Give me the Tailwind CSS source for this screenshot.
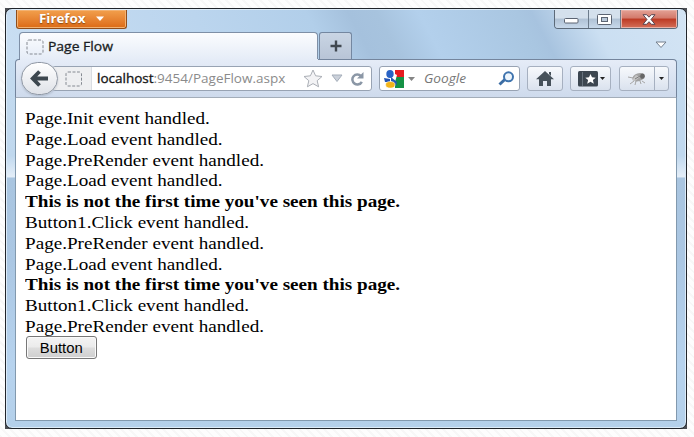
<!DOCTYPE html>
<html lang="en">
<head>
<meta charset="utf-8">
<title>Page Flow</title>
<script src="https://cdn.jsdelivr.net/npm/@tailwindcss/browser@4"></script>
</head>
<body class="w-[694px] h-[437px] overflow-hidden bg-[#fafafa] bg-[repeating-linear-gradient(45deg,#f7f7f7_0_2px,#fdfdfd_2px_6px)] pl-[5px] pt-[8px]">
<div class="w-[682px] h-[421px] bg-[#4a4d52]">
<div class="w-full h-full rounded-[7px] border border-[#20242a] bg-[linear-gradient(#c6dcf0,#c0d8ee_35%,#e4eef8_40%,#a9c5e0_40.4%,#abc7e3_60%,#b7d3ee_85%,#b4d0ea)] flex flex-col shadow-[inset_0_0_0_1px_#dcebf8] overflow-hidden">
  <div class="h-[50px] shrink-0 flex flex-col rounded-t-[5px] bg-[linear-gradient(62deg,#c9def2_0%,#bbd5ee_30%,#b2cfea_46%,#a5c1dd_52%,#a7c3de_56%,#b3d0ec_62%,#a9c6e1_76%,#a7c3df_78%,#cbdff2_86%,#d3e4f4_100%)] mx-px mt-px">
    <!-- title bar -->
    <div class="h-[23px] flex justify-between pl-[9px] pr-[20px]">
      <div class="w-[111px] h-[19px] rounded-b-[3px] border border-t-0 border-[#8f4d1b] bg-gradient-to-b from-[#f2a04c] to-[#dc6a12] shadow-[inset_0_0_0_1px_#f3b272] flex items-center pl-[22px] gap-[9px]">
        <span class="font-['Open_Sans',sans-serif] font-bold text-[11.5px] leading-none text-white w-[47px] whitespace-nowrap [text-shadow:0_1px_1px_#8a4a10]"><span class="inline-block origin-left scale-x-[1.16]">Firefox</span></span>
        <svg width="10" height="6" viewBox="0 0 10 6"><path d="M1 .5h8L5 5z" fill="#fff"/></svg>
      </div>
      <div class="w-[124px] h-[19px] -mr-[13px] rounded-b-[4px] border border-t-0 border-[#5c6a79] flex overflow-hidden">
        <div class="w-[34px] bg-[linear-gradient(#d4e0ec_45%,#b0c2d5_50%,#c7d8ea)] border-r border-[#6d7c8c] flex items-center justify-center pt-[4px]">
          <svg width="15" height="6"><rect x=".5" y=".5" width="13.5" height="4.5" rx="1" fill="#fff" stroke="#5c6472"/></svg>
        </div>
        <div class="w-[32px] bg-[linear-gradient(#d4e0ec_45%,#b0c2d5_50%,#c7d8ea)] border-r border-[#6d7c8c] flex items-center justify-center">
          <svg width="15" height="11"><rect x=".5" y=".5" width="14" height="10" rx="1" fill="#fff" stroke="#5c6472"/><rect x="4.5" y="3.5" width="6" height="4" fill="#b9c8d8" stroke="#5c6472"/></svg>
        </div>
        <div class="flex-1 bg-[linear-gradient(#e3a195,#d3796a_45%,#bd3a24_50%,#d4705a)] shadow-[inset_0_0_0_1px_#e9b0a6] flex items-center justify-center">
          <svg width="14" height="11" viewBox="0 0 14 11"><path d="M1 .7h3.6L7 3.2 9.4.7H13L9 5.5l4 4.8H9.4L7 7.7l-2.4 2.6H1l4-4.8z" fill="#fff" stroke="#5b4550"/></svg>
        </div>
      </div>
    </div>
    <!-- tab strip -->
    <div class="flex-1 flex pl-[12px] pr-[20px]">
      <div class="w-[299px] h-[28px] rounded-t-[4px] border border-b-0 border-[#7e8fa6] bg-gradient-to-b from-[#fbfcfe] to-[#e5ecf7] flex items-center pl-[6px] gap-[4px]">
        <svg width="18" height="16"><rect x="1" y="1" width="16" height="14" rx="2" fill="none" stroke="#858a92" stroke-dasharray="3 1.5"/></svg>
        <span class="font-['Open_Sans',sans-serif] text-[12px] leading-none text-[#1b1f25] whitespace-nowrap [-webkit-text-stroke:0.3px_#1b1f25] origin-left scale-x-[1.16]">Page Flow</span>
      </div>
      <div class="w-[33px] h-[27px] ml-px rounded-t-[3px] border border-b-0 border-[#7487a0] bg-gradient-to-b from-[#c9d5e4] to-[#b8c4d6] flex items-center justify-center">
        <svg width="12" height="12"><path d="M6 .5v11M.5 6h11" stroke="#414850" stroke-width="2.4"/></svg>
      </div>
      <div class="flex-1 flex justify-end items-center pb-[2px]">
        <svg class="-mr-[2px]" width="12" height="8"><path d="M1 1h10L6 6.5z" fill="#fff" stroke="#727e8c"/></svg>
      </div>
    </div>
  </div>
  <!-- navigation bar -->
  <div class="h-[39px] shrink-0 ml-[9px] mr-[9px] -mt-px border border-[#74859d] border-b-[#a3adb9] rounded-t-[4px] bg-gradient-to-b from-[#e5ecf7] to-[#cedaec] flex items-center relative">
    <div class="absolute left-[4px] -top-px w-[298px] h-px bg-[#e5ecf7]"></div>
    <div class="w-[37px] h-[33px] shrink-0 ml-[5px] rounded-full border border-[#9098a4] bg-gradient-to-b from-white to-[#dfe2e8] shadow-[0_1px_2px_#7c879860] flex items-center justify-center relative z-10">
      <svg width="19" height="17" viewBox="0 0 19 17"><path d="M9.5 1.5L2.7 8.5l6.8 7M3 8.5h15" fill="none" stroke="#3d474f" stroke-width="3.8"/></svg>
    </div>
    <div class="w-[320px] h-[25px] -ml-[6px] shrink-0 border border-[#98a3b3] rounded-[3px] bg-white flex items-center overflow-hidden">
      <div class="w-[39px] h-full pl-[12px] bg-[#eeeff1] border-r border-[#dadde2] flex items-center shrink-0">
        <svg width="18" height="16"><rect x="1" y="1" width="15.5" height="14" rx="2" fill="none" stroke="#858a92" stroke-dasharray="3 1.5"/></svg>
      </div>
      <div class="w-[208px] shrink-0 pl-[5px] font-['Open_Sans',sans-serif] text-[12px] leading-none text-[#8b8b8b] whitespace-nowrap"><span class="inline-block origin-left scale-x-[1.125]"><span class="text-[#151515] [-webkit-text-stroke:0.3px_#151515]">localhost</span>:9454/PageFlow.aspx</span></div>
      <svg class="ml-[3px] shrink-0" width="20" height="19" viewBox="0 0 20 19"><path d="M10 1l2.6 5.8 6.4.7-4.8 4.2 1.4 6.1L10 14.6l-5.6 3.2 1.4-6.1L1 7.5l6.4-.7z" fill="#f3f3f5" stroke="#aaaeb5"/></svg>
      <svg class="ml-[8px] shrink-0" width="12" height="9"><path d="M1 1h10L6 7.5z" fill="#cbd1da" stroke="#a4adb9"/></svg>
      <svg class="ml-[7px] shrink-0" width="14" height="14" viewBox="0 0 14 14"><path d="M11.8 9.8A5 5 0 1 1 11 4" fill="none" stroke="#8b97a6" stroke-width="2.5"/><path d="M13.5 0v6.6H7z" fill="#8b97a6"/></svg>
    </div>
    <div class="w-[141px] h-[25px] ml-[7px] shrink-0 border border-[#98a3b3] rounded-[3px] bg-white flex items-center pl-[4px]">
      <svg class="shrink-0" width="20" height="18" viewBox="0 0 20 18"><path d="M11 0h9v7h-9z" fill="#e51b20"/><path d="M12 7h8v11h-9V9z" fill="#159245"/><path d="M0 8l6 1v3H1z" fill="#2555b4"/><path d="M9 3l4 2-2 7-4-3z" fill="#fff"/><ellipse cx="6" cy="4" rx="3.7" ry="4" fill="#2862c5"/><path d="M7 7l6 5-1 4-5-5z" fill="#2559b5"/><ellipse cx="6.3" cy="14.8" rx="4.7" ry="3.3" fill="#f3b51a" stroke="#fff" stroke-width=".6"/></svg>
      <svg class="ml-[4px] shrink-0" width="7" height="4"><path d="M0 0h7L3.5 4z" fill="#858585"/></svg>
      <span class="ml-[9px] w-[75px] font-['Open_Sans',sans-serif] italic text-[12px] leading-none text-[#777]"><span class="inline-block origin-left scale-x-[1.14]">Google</span></span>
      <svg class="shrink-0 -ml-px" width="17" height="15" viewBox="0 0 17 15"><path d="M6.8 8.5L1.5 13.5" stroke="#3c6da4" stroke-width="3"/><circle cx="10.5" cy="5.8" r="4.5" fill="#eef6fd" stroke="#3f74ae" stroke-width="2"/></svg>
    </div>
    <div class="w-[36px] h-[25px] ml-[7px] shrink-0 border border-[#a6b0c0] rounded-[3px] bg-gradient-to-b from-[#f7f9fc] to-[#dae2ee] flex items-center justify-center">
      <svg width="20" height="16" viewBox="0 0 20 16"><path d="M10 0l9 8.3h-3V15h-4v-5H8v5H4V8.3H1zM14 1h2v4l-2-2z" fill="#46515a"/></svg>
    </div>
    <div class="w-[41px] h-[25px] ml-[7px] shrink-0 border border-[#a6b0c0] rounded-[3px] bg-gradient-to-b from-[#f7f9fc] to-[#dae2ee] flex items-center pl-[7px] gap-[2px]">
      <svg width="20" height="16" viewBox="0 0 20 16"><rect width="20" height="15.5" rx="1.5" fill="#3c4650"/><path d="M4.5 1v14" stroke="#67727d"/><path d="M12.5 3l1.5 3.3 3.7.4-2.8 2.4.9 3.6-3.3-1.9-3.3 1.9.9-3.6-2.8-2.4 3.7-.4z" fill="#fff"/></svg>
      <svg width="5" height="3"><path d="M0 0h5L2.5 3z" fill="#222"/></svg>
    </div>
    <div class="w-[50px] h-[25px] ml-[8px] shrink-0 border border-[#a6b0c0] rounded-[3px] bg-gradient-to-b from-[#f7f9fc] to-[#dae2ee] flex items-center">
      <div class="w-[35px] h-full border-r border-[#a6b0c0] flex items-center justify-center">
        <svg width="20" height="15" viewBox="0 0 20 15"><path d="M1 6l5 1M3 13l4-3M8 14l1-4M14 13l-1-3M15 10l3 2" stroke="#a5a5a5" fill="none"/><ellipse cx="11.5" cy="6.3" rx="6.3" ry="4" transform="rotate(-18 11.5 6.3)" fill="#a2a2a2"/><ellipse cx="15.5" cy="5.2" rx="2.3" ry="2.6" fill="#666"/><path d="M5 9l4-5 4 2-5 4z" fill="#c5c5c5"/><path d="M8 8l5-3" stroke="#7c7c7c"/></svg>
      </div>
      <div class="flex-1 flex justify-center"><svg width="5" height="3"><path d="M0 0h5L2.5 3z" fill="#222"/></svg></div>
    </div>
  </div>
  <!-- page -->
  <div class="h-[323px] shrink-0 ml-[9px] mr-[9px] bg-white border border-t-0 border-[#8299ae] pl-[9px] pt-[11px]">
    <div class="w-[560px] origin-left scale-x-[1.125] font-['Liberation_Serif',serif] text-[17px] leading-[20.8px] text-black whitespace-nowrap">
      <p>Page.Init event handled.</p>
      <p>Page.Load event handled.</p>
      <p>Page.PreRender event handled.</p>
      <p>Page.Load event handled.</p>
      <p class="font-bold">This is not the first time you've seen this page.</p>
      <p>Button1.Click event handled.</p>
      <p>Page.PreRender event handled.</p>
      <p>Page.Load event handled.</p>
      <p class="font-bold">This is not the first time you've seen this page.</p>
      <p>Button1.Click event handled.</p>
      <p>Page.PreRender event handled.</p>
    </div>
    <button class="block w-[71px] h-[23px] ml-px -mt-[1.4px] border border-[#777] rounded-[3px] bg-[linear-gradient(#f4f4f4,#ebebeb_48%,#dddddd_52%,#cfcfcf)] shadow-[inset_0_0_0_1px_#fafafa] font-['Liberation_Sans',sans-serif] text-[14px] leading-none text-black"><span class="inline-block scale-x-[1.06]">Button</span></button>
  </div>
</div>
</div>
</body>
</html>
